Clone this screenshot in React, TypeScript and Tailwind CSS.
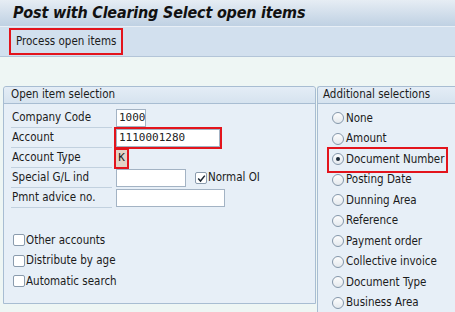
import React from 'react';

const font = "font-['DejaVu_Sans_Condensed','DejaVu_Sans',sans-serif]";

function Radio({ checked }: { checked?: boolean }) {
  return (
    <span className="w-[12px] h-[12px] rounded-full border border-[#8597aa] bg-gradient-to-b from-[#fdfdfd] to-[#e4e9ee] flex items-center justify-center shrink-0">
      {checked && <span className="w-[4px] h-[4px] rounded-full bg-[#1c2a38]" />}
    </span>
  );
}

function Check({ checked }: { checked?: boolean }) {
  return (
    <span className="w-[12px] h-[12px] rounded-[2px] border border-[#8a9bad] bg-white flex items-center justify-center shrink-0">
      {checked && (
        <svg width="9" height="9" viewBox="0 0 9 9">
          <path d="M1.2 4.6 L3.5 7 L7.8 1.6" fill="none" stroke="#1c2733" strokeWidth="1.5" />
        </svg>
      )}
    </span>
  );
}

function Row({ label, children }: { label: string; children?: React.ReactNode }) {
  return (
    <div className="h-[20px] flex items-center">
      <div className="w-[101px] h-[20px] ml-[7px] border-b border-[#c2d1df] flex items-center pl-[1px]">{label}</div>
      <div className="ml-[4px] flex items-center h-[20px]">{children}</div>
    </div>
  );
}

const inputCls =
  "h-[18px] bg-white border border-[#a3b3c4] px-[2px] flex items-center font-['DejaVu_Sans_Mono',monospace] text-[11px] text-[#222]";

export default function App() {
  const radios = [
    'None',
    'Amount',
    'Document Number',
    'Posting Date',
    'Dunning Area',
    'Reference',
    'Payment order',
    'Collective invoice',
    'Document Type',
    'Business Area',
  ];

  return (
    <div className={`w-[455px] h-[312px] overflow-hidden bg-[#eef6f4] text-[11.5px] text-[#1b1b1b] ${font}`}>
      {/* Title */}
      <div className="h-[26px] bg-gradient-to-b from-[#e6edf4] to-[#bfd1e3] flex items-center pl-[13px]">
        <span className="text-[16px] tracking-[-0.2px] font-bold italic font-stretch-condensed font-['DejaVu_Sans',sans-serif] text-[#111] leading-none">
          Post with Clearing Select open items
        </span>
      </div>

      {/* Toolbar */}
      <div className="h-[31px] bg-[#d2e0ee] border-t border-[#e8eff6] border-b border-b-[#b3c5d8] flex items-center pl-[9px]">
        <div className="h-[27px] border-2 border-[#e3141c] flex items-center px-[5px]">Process open items</div>
      </div>

      <div className="h-[29px]" />

      <div className="flex items-start">
        {/* Left panel */}
        <div className="ml-[3px] w-[313px] h-[218px] border border-[#a8bdd2] rounded-t-[3px] bg-[#e7eff7]">
          <div className="h-[17px] bg-gradient-to-b from-[#e4edf6] to-[#d6e3ef] border-b border-[#a8bdd2] flex items-center pl-[7px] rounded-t-[3px]">
            Open item selection
          </div>
          <div className="pt-[4px]">
            <Row label="Company Code">
              <div className={`${inputCls} w-[30px]`}>1000</div>
            </Row>
            <Row label="Account">
              <div className="relative">
                <div className={`${inputCls} w-[104px]`}>1110001280</div>
                <span className="absolute -inset-[2px] border-2 border-[#e3141c]" />
              </div>
            </Row>
            <Row label="Account Type">
              <div className="relative">
                <div className="h-[17px] w-[11px] bg-[#e2d3c6] flex items-center justify-center font-['DejaVu_Sans_Mono',monospace] text-[11px]">K</div>
                <span className="absolute -inset-x-[2px] -inset-y-[2px] border-2 border-[#e3141c]" />
              </div>
            </Row>
            <Row label="Special G/L ind">
              <div className={`${inputCls} w-[70px]`} />
              <div className="ml-[9px] flex items-center gap-[1px]">
                <Check checked />
                <span>Normal OI</span>
              </div>
            </Row>
            <Row label="Pmnt advice no.">
              <div className={`${inputCls} w-[109px]`} />
            </Row>
          </div>
          <div className="mt-[22px] pl-[9px] flex flex-col">
            {['Other accounts', 'Distribute by age', 'Automatic search'].map((t) => (
              <div key={t} className="h-[20.5px] flex items-center gap-[1px]">
                <Check />
                <span>{t}</span>
              </div>
            ))}
          </div>
        </div>

        {/* Right panel */}
        <div className="ml-[1px] flex-1 h-[240px] border border-r-0 border-[#a8bdd2] rounded-tl-[3px] bg-[#e7eff7]">
          <div className="h-[17px] bg-gradient-to-b from-[#e4edf6] to-[#d6e3ef] border-b border-[#a8bdd2] flex items-center pl-[5px] rounded-tl-[3px]">
            Additional selections
          </div>
          <div className="pt-[4px] pl-[14px] flex flex-col">
            {radios.map((r, i) => (
              <div key={r} className="h-[20.5px] flex items-center">
                <div className="relative flex items-center gap-[2px]">
                  <Radio checked={i === 2} />
                  <span>{r}</span>
                  {i === 2 && <span className="absolute -left-[5px] -right-[4px] -top-[4px] -bottom-[5px] border-2 border-[#e3141c]" />}
                </div>
              </div>
            ))}
          </div>
        </div>
      </div>
    </div>
  );
}
